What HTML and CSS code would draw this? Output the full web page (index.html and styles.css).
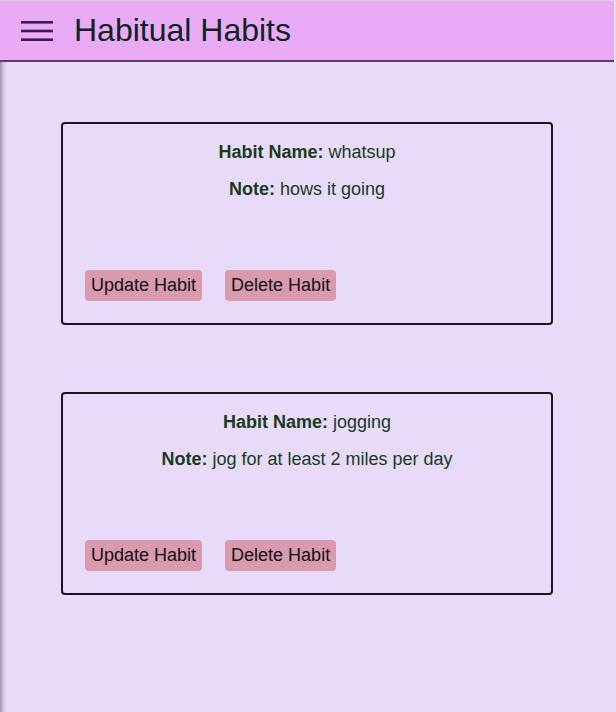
FILE: index.html
```html
<!DOCTYPE html>
<html>
<head>
<meta charset="utf-8">
<link rel="stylesheet" href="styles.css">
</head>
<body>
<div class="app">
  <header class="topbar">
    <button class="menu" aria-label="menu">
      <svg width="32" height="22" viewBox="0 0 32 22">
        <rect x="0" y="1" width="32" height="2.6" fill="#3b1a57"/>
        <rect x="0" y="9.7" width="32" height="2.6" fill="#3b1a57"/>
        <rect x="0" y="18.4" width="32" height="2.6" fill="#3b1a57"/>
      </svg>
    </button>
    <h1 class="title">Habitual Habits</h1>
  </header>
  <main class="main">
    <section class="card">
      <p class="line"><b>Habit Name:</b> whatsup</p>
      <p class="line"><b>Note:</b> hows it going</p>
      <div class="actions">
        <button class="btn">Update Habit</button>
        <button class="btn">Delete Habit</button>
      </div>
    </section>
    <section class="card">
      <p class="line"><b>Habit Name:</b> jogging</p>
      <p class="line"><b>Note:</b> jog for at least 2 miles per day</p>
      <div class="actions">
        <button class="btn">Update Habit</button>
        <button class="btn">Delete Habit</button>
      </div>
    </section>
  </main>
</div>
</body>
</html>
```

FILE: styles.css
```css
html, body {
  margin: 0;
  padding: 0;
  height: 100%;
  background: #e8dbf9;
  font-family: "Liberation Sans", Arial, sans-serif;
}
.app {
  width: 614px;
  height: 712px;
  display: flex;
  flex-direction: column;
}
.topbar {
  height: 59px;
  border-top: 1px solid #d8d2da;
  border-bottom: 2px solid #5b3f66;
  background: #e9abf6;
  display: flex;
  align-items: center;
  padding-left: 21px;
  gap: 21px;
}
.menu {
  background: none;
  border: 0;
  padding: 0;
  margin-top: 1px;
  display: flex;
  width: 32px;
  height: 22px;
}
.title {
  margin: 0;
  font-weight: normal;
  font-size: 32px;
  color: #0f2422;
  margin-bottom: 1px;
}
.main {
  flex: 1;
  background: linear-gradient(to right, #9d93a8 0px, #bfb4cb 2px, #d9cdea 4px, #e8dbf9 7px);
  padding-top: 60px;
  display: flex;
  flex-direction: column;
  align-items: center;
  gap: 67px;
}
.card {
  height: 199px;
  border: 2px solid #1a1620;
  border-radius: 4px;
  padding: 0 22px;
  box-sizing: content-box;
  width: 444px;
  display: flex;
  flex-direction: column;
  color: #1a3a1c;
  font-size: 18px;
}
.line {
  margin: 16px 0 0;
  text-align: center;
}
.line:first-child {
  margin-top: 18px;
}
.line b {
  font-weight: bold;
}
.actions {
  margin-top: auto;
  margin-bottom: 22px;
  display: flex;
  gap: 23px;
}
.btn {
  font-family: "Liberation Sans", Arial, sans-serif;
  font-size: 18px;
  color: #121018;
  background: #d99aad;
  border: 0;
  border-radius: 4px;
  padding: 5px 6px 5px;
  height: 31px;
}
```
